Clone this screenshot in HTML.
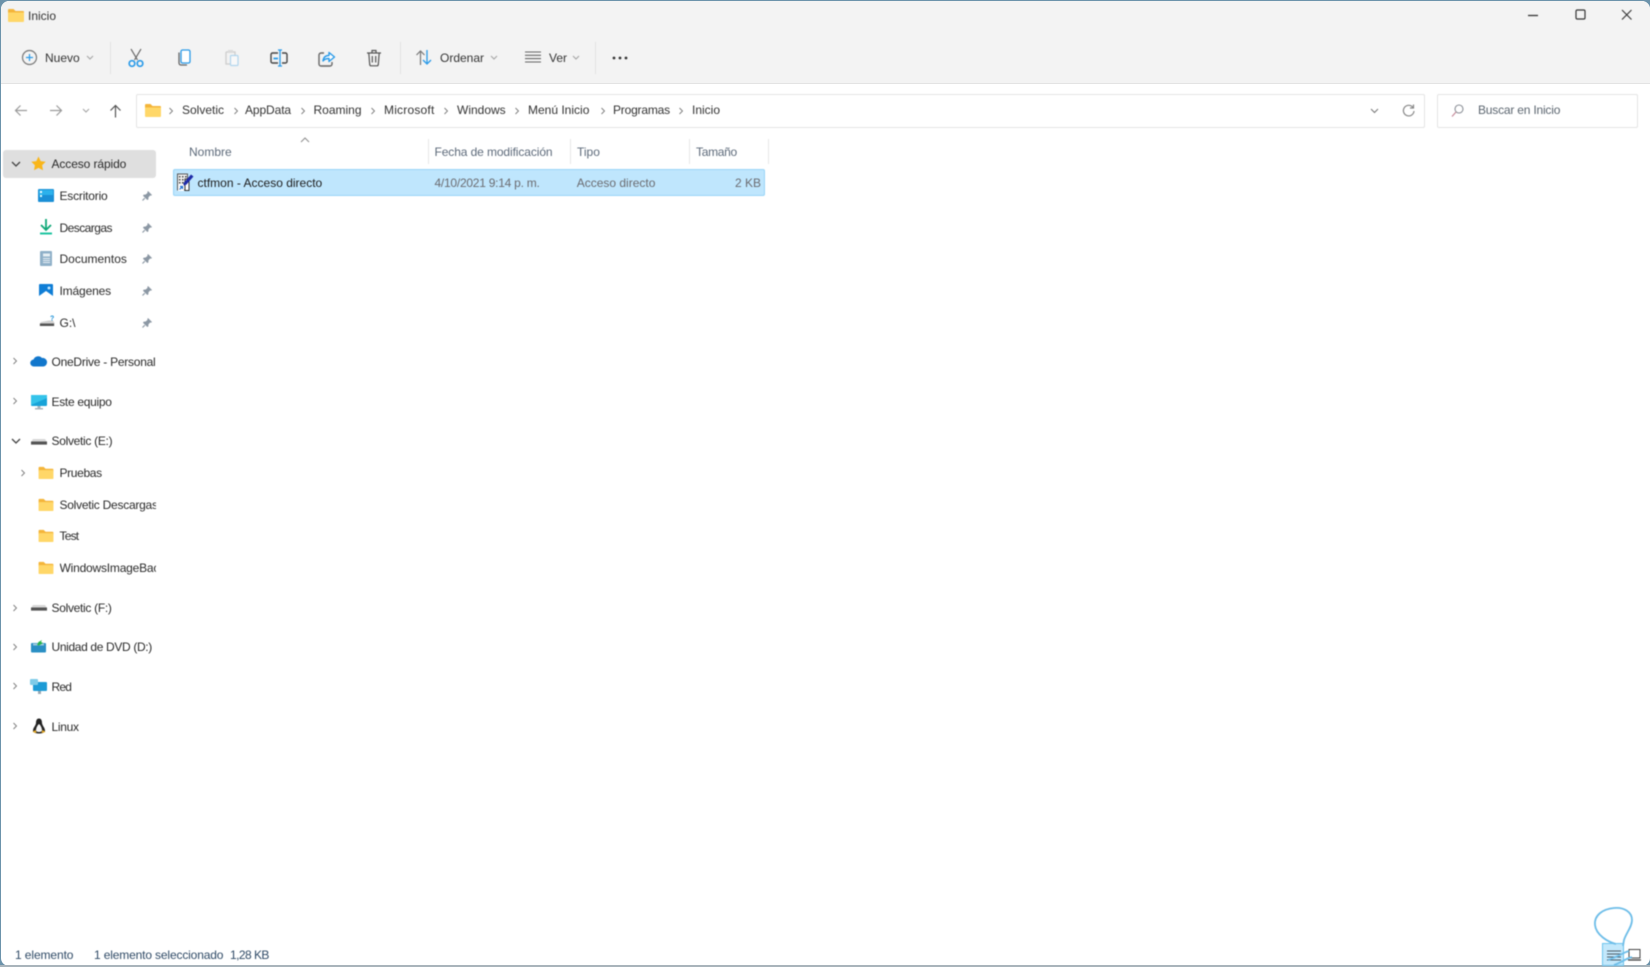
<!DOCTYPE html>
<html lang="es">
<head>
<meta charset="utf-8">
<title>Inicio</title>
<style>
html,body{margin:0;padding:0;width:1650px;height:967px;overflow:hidden;background:#6c93ab}
body{font-family:"Liberation Sans",sans-serif;font-size:12px;color:#2a2a2a}
#win{position:absolute;left:1px;top:1px;width:1649px;height:965px;background:#fff;border-radius:8px;overflow:hidden}
#edge{position:absolute;left:0;top:965px;width:1650px;height:2px;background:#a9b4bb}
#bar{position:absolute;left:-1px;top:-1px;width:1650px;height:83px;background:#f3f3f3;border-bottom:1px solid #e3e3e3}
.t{position:absolute;white-space:nowrap;line-height:16px;height:16px}
.sep{position:absolute;width:1px;background:#e2e2e2}
svg{position:absolute;overflow:visible}
.box{position:absolute;top:94px;height:32px;background:#fff;border:1px solid #e4e4e4;border-radius:2px}
.nav{color:#333}
.h{color:#5d6a7a}
.g{color:#6b6b70}
.st{color:#2f4a66}
</style>
</head>
<body>
<svg width="0" height="0" style="position:absolute">
<defs>
<symbol id="folder" viewBox="0 0 16 14"><path d="M0 2a1 1 0 0 1 1-1h4.500l2 2H15a1 1 0 0 1 1 1v2H0z" fill="#f4b53a"/><path d="M0 4.500h16V13a1 1 0 0 1-1 1H1a1 1 0 0 1-1-1z" fill="#ffd768"/></symbol>
<symbol id="pin" viewBox="0 0 12 12"><path d="M7 1l4 4-1 .7-.7-.3L7.500 7.300 7.300 9.500 6.300 10 2 5.700l.5-1 2.200-.2L6.600 2.700 6.300 2z" fill="#8c98a4"/><path d="M3.800 8.200L1.500 10.500" stroke="#8c98a4" stroke-width="1.200"/></symbol>
<symbol id="cr" viewBox="0 0 8 10"><path d="M2 1l4 4-4 4" fill="none" stroke="#7b7b7b" stroke-width="1.200"/></symbol>
<symbol id="cd" viewBox="0 0 10 8"><path d="M1 2l4 4 4-4" fill="none" stroke="#444" stroke-width="1.300"/></symbol>
<symbol id="cs" viewBox="0 0 8 5"><path d="M1 1l3 3 3-3" fill="none" stroke="#a2a2a2" stroke-width="1"/></symbol>
<symbol id="drive" viewBox="0 0 16 8"><path d="M2 1h12l2 3v3H0V4z" fill="#d7d7d7"/><rect x="0" y="3.500" width="16" height="3" fill="#555"/></symbol>
</defs>
</svg>

<div id="win">
<div id="bar"></div>
</div>
<div id="edge"></div>

<div id="ui" style="position:absolute;left:0;top:0;width:1650px;height:967px;filter:blur(.4px)">
<!-- title -->
<svg style="left:8px;top:8px" width="16" height="14"><use href="#folder" width="16" height="14"/></svg>
<div class="t" style="left:28px;top:8px;color:#333">Inicio</div>
<!-- window controls -->
<svg style="left:1527px;top:10px" width="14" height="12"><path d="M1 5.500h10" stroke="#333" stroke-width="1.300"/></svg>
<svg style="left:1575px;top:9px" width="12" height="12"><rect x="1" y="1" width="9" height="9" rx="1.200" fill="none" stroke="#333" stroke-width="1.200"/></svg>
<svg style="left:1621px;top:9px" width="12" height="12"><path d="M1 1l9.500 9.500M10.500 1L1 10.500" stroke="#333" stroke-width="1.100"/></svg>

<!-- toolbar -->
<svg style="left:21px;top:49px" width="17" height="17"><circle cx="8.500" cy="8.500" r="7" fill="none" stroke="#777" stroke-width="1.200"/><path d="M8.500 5v7M5 8.500h7" stroke="#2a9ae8" stroke-width="1.200"/></svg>
<div class="t nav" style="left:45px;top:50px">Nuevo</div>
<svg style="left:86px;top:55px" width="8" height="5"><use href="#cs" width="8" height="5"/></svg>
<div class="sep" style="left:110px;top:42px;height:32px"></div>

<svg style="left:128px;top:48px" width="16" height="20"><path d="M3 1l6.500 11M13 1L6.500 12" stroke="#666" stroke-width="1.200" fill="none"/><circle cx="4" cy="15.500" r="2.800" fill="none" stroke="#2a9ae8" stroke-width="1.700"/><circle cx="12" cy="15.500" r="2.800" fill="none" stroke="#2a9ae8" stroke-width="1.700"/></svg>
<svg style="left:177px;top:49px" width="14" height="18"><path d="M2 3.500v10.500a2 2 0 0 0 2 2h6" fill="none" stroke="#666" stroke-width="1.300"/><rect x="4" y="1" width="9" height="13" rx="1.500" fill="#fff" stroke="#2a9ae8" stroke-width="1.300"/></svg>
<svg style="left:224px;top:49px" width="15" height="18" opacity=".42"><path d="M2 3h9v3M2 3v12h4" fill="none" stroke="#999" stroke-width="1.300"/><rect x="4" y="1" width="5" height="3" fill="#bbb"/><rect x="6.500" y="6.500" width="7.500" height="10" rx="1" fill="#fff" stroke="#5aaee8" stroke-width="1.200"/></svg>
<svg style="left:270px;top:49px" width="18" height="18"><path d="M8 4H2.500a1.500 1.500 0 0 0-1.500 1.500v7a1.500 1.500 0 0 0 1.500 1.500H8M12 4h3.500A1.500 1.500 0 0 1 17 5.500v7a1.500 1.500 0 0 1-1.500 1.500H12" fill="none" stroke="#444" stroke-width="1.400"/><path d="M10 1v16M8 1h4M8 17h4" stroke="#2a9ae8" stroke-width="1.300" fill="none"/><path d="M3.500 9.500H8" stroke="#2a9ae8" stroke-width="1.800"/></svg>
<svg style="left:318px;top:49px" width="18" height="18"><path d="M6 4H3a2 2 0 0 0-2 2v9a2 2 0 0 0 2 2h9a2 2 0 0 0 2-2v-2" fill="none" stroke="#666" stroke-width="1.400"/><path d="M5 12c.5-4 3-5.500 6-5.500V3.500l5.500 4.500-5.500 4.500V9.500c-2.500 0-4.500.5-6 2.500z" fill="#fff" stroke="#2a9ae8" stroke-width="1.400" stroke-linejoin="round"/></svg>
<svg style="left:366px;top:49px" width="16" height="18"><path d="M1 4h14M6 3.500V1.500h4v2M2.800 4l.9 11.500a1.500 1.500 0 0 0 1.500 1.300h5.600a1.500 1.500 0 0 0 1.500-1.300L13.200 4M6.300 7v6.500M9.700 7v6.500" fill="none" stroke="#555" stroke-width="1.200"/></svg>
<div class="sep" style="left:400px;top:42px;height:32px"></div>

<svg style="left:415px;top:49px" width="18" height="17"><path d="M5.500 16V2M1.500 6l4-4 4 4" fill="none" stroke="#777" stroke-width="1.200"/><path d="M12 1v14M8 11l4 4 4-4" fill="none" stroke="#2a9ae8" stroke-width="1.300"/></svg>
<div class="t nav" style="left:440px;top:50px">Ordenar</div>
<svg style="left:490px;top:55px" width="8" height="5"><use href="#cs" width="8" height="5"/></svg>
<svg style="left:525px;top:51px" width="16" height="13"><path d="M0 1h16M0 4.300h16M0 7.600h16M0 11h16" stroke="#666" stroke-width="1.100"/></svg>
<div class="t nav" style="left:549px;top:50px">Ver</div>
<svg style="left:572px;top:55px" width="8" height="5"><use href="#cs" width="8" height="5"/></svg>
<div class="sep" style="left:595px;top:42px;height:32px"></div>
<svg style="left:612px;top:56px" width="16" height="4"><circle cx="2" cy="2" r="1.400" fill="#333"/><circle cx="8" cy="2" r="1.400" fill="#333"/><circle cx="14" cy="2" r="1.400" fill="#333"/></svg>

<!-- nav row -->
<svg style="left:14px;top:104px" width="14" height="13"><path d="M13 6.500H1.500M6.500 1.500l-5 5 5 5" fill="none" stroke="#9a9a9a" stroke-width="1.200"/></svg>
<svg style="left:49px;top:104px" width="14" height="13"><path d="M1 6.500h11.500M7.500 1.500l5 5-5 5" fill="none" stroke="#9a9a9a" stroke-width="1.200"/></svg>
<svg style="left:82px;top:108px" width="8" height="5"><use href="#cs" width="8" height="5"/></svg>
<svg style="left:109px;top:104px" width="13" height="14"><path d="M6.500 13.500V1.500M1.500 6.500l5-5 5 5" fill="none" stroke="#555" stroke-width="1.200"/></svg>

<div class="box" style="left:136px;width:1287px"></div>
<div class="box" style="left:1437px;width:199px"></div>
<svg style="left:145px;top:103px" width="16" height="14"><use href="#folder" width="16" height="14"/></svg>
<svg style="left:168px;top:107px" width="6" height="8"><use href="#cr" width="6" height="8"/></svg>
<div class="t nav" style="left:182px;top:102px">Solvetic</div>
<svg style="left:233px;top:107px" width="6" height="8"><use href="#cr" width="6" height="8"/></svg>
<div class="t nav" style="left:245px;top:102px;letter-spacing:-.1px">AppData</div>
<svg style="left:300px;top:107px" width="6" height="8"><use href="#cr" width="6" height="8"/></svg>
<div class="t nav" style="left:313.500px;top:102px">Roaming</div>
<svg style="left:370px;top:107px" width="6" height="8"><use href="#cr" width="6" height="8"/></svg>
<div class="t nav" style="left:384px;top:102px;letter-spacing:.2px">Microsoft</div>
<svg style="left:443px;top:107px" width="6" height="8"><use href="#cr" width="6" height="8"/></svg>
<div class="t nav" style="left:457px;top:102px">Windows</div>
<svg style="left:514px;top:107px" width="6" height="8"><use href="#cr" width="6" height="8"/></svg>
<div class="t nav" style="left:528px;top:102px">Menú Inicio</div>
<svg style="left:600px;top:107px" width="6" height="8"><use href="#cr" width="6" height="8"/></svg>
<div class="t nav" style="left:613px;top:102px;letter-spacing:-.2px">Programas</div>
<svg style="left:678px;top:107px" width="6" height="8"><use href="#cr" width="6" height="8"/></svg>
<div class="t nav" style="left:692px;top:102px">Inicio</div>

<svg style="left:1370px;top:108px" width="9" height="6"><path d="M1 1l3.500 3.500L8 1" fill="none" stroke="#777" stroke-width="1"/></svg>
<svg style="left:1402px;top:104px" width="13" height="13"><path d="M11 3.500A5.300 5.300 0 1 0 12 7M11.500 .5v3.500H8" fill="none" stroke="#888" stroke-width="1.200"/></svg>
<svg style="left:1451px;top:104px" width="13" height="14"><circle cx="8" cy="5" r="4" fill="none" stroke="#8a8f96" stroke-width="1.100"/><path d="M5 8l-4 4.500" stroke="#c58a9a" stroke-width="1.200"/></svg>
<div class="t g" style="left:1478px;top:102px;color:#5c6670;letter-spacing:-.2px">Buscar en Inicio</div>

<!-- sidebar -->
<div style="position:absolute;left:3px;top:150px;width:153px;height:28px;background:#dfdfdf;border-radius:3px"></div>
<svg style="left:11px;top:160px" width="10" height="8"><use href="#cd" width="10" height="8"/></svg>
<svg style="left:31px;top:156px" width="15" height="15"><path d="M7.500 .5l2.200 4.600 5 .7-3.600 3.500.9 5-4.500-2.400L3 14.300l.9-5L.3 5.800l5-.7z" fill="#f9b61a"/></svg>
<div class="t" style="left:51.500px;top:156px;letter-spacing:-.1px">Acceso rápido</div>

<svg style="left:38px;top:189px" width="16" height="13"><rect width="16" height="13" rx="1" fill="#1a8fd6"/><rect x="1" y="1" width="14" height="5" fill="#2cb2ec"/><rect x="2" y="2" width="2" height="2" fill="#fff"/><rect x="2" y="6" width="2" height="2" fill="#dff"/></svg>
<div class="t" style="left:59.500px;top:188px;letter-spacing:-.2px">Escritorio</div>
<svg style="left:141px;top:190px" width="12" height="12"><use href="#pin" width="12" height="12"/></svg>

<svg style="left:39px;top:219px" width="14" height="16"><path d="M7 0v10.500M2 6l5 5 5-5" fill="none" stroke="#10a878" stroke-width="1.800"/><path d="M1 14.500h12" stroke="#1fc4a0" stroke-width="2"/></svg>
<div class="t" style="left:59.500px;top:220px;letter-spacing:-.55px">Descargas</div>
<svg style="left:141px;top:222px" width="12" height="12"><use href="#pin" width="12" height="12"/></svg>

<svg style="left:40px;top:251px" width="12" height="15"><rect width="12" height="15" rx="1" fill="#8fb0c8"/><rect x="3" y="2.500" width="7" height="3" fill="#e6eef4"/><path d="M3 7.500h7M3 9.500h7M3 11.500h7" stroke="#e6eef4" stroke-width="1"/></svg>
<div class="t" style="left:59.500px;top:251px">Documentos</div>
<svg style="left:141px;top:253px" width="12" height="12"><use href="#pin" width="12" height="12"/></svg>

<svg style="left:39px;top:284px" width="14" height="14"><rect width="14" height="14" rx="1" fill="#0f7ed6"/><path d="M0 12l7-5 7 5v2H0z" fill="#fff"/><circle cx="10" cy="4" r="1.500" fill="#bfe6ff"/></svg>
<div class="t" style="left:59.500px;top:283px;letter-spacing:-.15px">Imágenes</div>
<svg style="left:141px;top:285px" width="12" height="12"><use href="#pin" width="12" height="12"/></svg>

<svg style="left:39px;top:316px" width="16" height="12"><path d="M2 6l8-1.500h4l1.500 2.500v3H.5V8z" fill="#d0d0d0"/><rect x="1" y="7.500" width="14" height="2.500" fill="#555"/><text x="11" y="4.500" font-family="Liberation Sans" font-size="7" font-weight="bold" fill="#1a8fd6">?</text></svg>
<div class="t" style="left:59.500px;top:315px">G:\</div>
<svg style="left:141px;top:317px" width="12" height="12"><use href="#pin" width="12" height="12"/></svg>

<svg style="left:12px;top:357px" width="6" height="8"><use href="#cr" width="6" height="8"/></svg>
<svg style="left:30px;top:355px" width="17" height="12"><path d="M4 11.500a3.500 3.500 0 0 1-.5-7A5 5 0 0 1 12 3a3.800 3.800 0 0 1 1.500 8.500z" fill="#1277cc"/></svg>
<div class="t" style="left:51.500px;top:354px;width:104px;overflow:hidden;letter-spacing:-.25px">OneDrive - Personal</div>

<svg style="left:12px;top:397px" width="6" height="8"><use href="#cr" width="6" height="8"/></svg>
<svg style="left:31px;top:395px" width="16" height="15"><rect width="16" height="11" rx="1" fill="#18a3d8"/><path d="M0 0h16v3L0 10z" fill="#35c3ea"/><rect x="6.500" y="11" width="3" height="2" fill="#a8b4bc"/><rect x="4" y="13" width="8" height="1.500" fill="#a8b4bc"/></svg>
<div class="t" style="left:51.500px;top:394px;letter-spacing:-.3px">Este equipo</div>

<svg style="left:11px;top:437px" width="10" height="8"><use href="#cd" width="10" height="8"/></svg>
<svg style="left:31px;top:438px" width="16" height="8"><use href="#drive" width="16" height="8"/></svg>
<div class="t" style="left:51.500px;top:433px;letter-spacing:-.3px">Solvetic (E:)</div>

<svg style="left:20px;top:469px" width="6" height="8"><use href="#cr" width="6" height="8"/></svg>
<svg style="left:38px;top:466px" width="16" height="13"><use href="#folder" width="16" height="13"/></svg>
<div class="t" style="left:59.500px;top:465px;letter-spacing:-.35px">Pruebas</div>

<svg style="left:38px;top:498px" width="16" height="13"><use href="#folder" width="16" height="13"/></svg>
<div class="t" style="left:59.500px;top:497px;width:96px;overflow:hidden;letter-spacing:-.25px">Solvetic Descargas</div>

<svg style="left:38px;top:529px" width="16" height="13"><use href="#folder" width="16" height="13"/></svg>
<div class="t" style="left:59.500px;top:528px;letter-spacing:-.8px">Test</div>

<svg style="left:38px;top:561px" width="16" height="13"><use href="#folder" width="16" height="13"/></svg>
<div class="t" style="left:59.500px;top:560px;width:96px;overflow:hidden;letter-spacing:-.2px">WindowsImageBackup</div>

<svg style="left:12px;top:604px" width="6" height="8"><use href="#cr" width="6" height="8"/></svg>
<svg style="left:31px;top:604px" width="16" height="8"><use href="#drive" width="16" height="8"/></svg>
<div class="t" style="left:51.500px;top:600px;letter-spacing:-.3px">Solvetic (F:)</div>

<svg style="left:12px;top:643px" width="6" height="8"><use href="#cr" width="6" height="8"/></svg>
<svg style="left:31px;top:639px" width="15" height="14"><rect y="4" width="15" height="9.500" rx="1" fill="#2a8fc4"/><path d="M2 4.500h11v2H2z" fill="#9cc8de"/><path d="M6 6l1.500-3L11 1l-1 2 2 1-4 2.500z" fill="#27b34a"/></svg>
<div class="t" style="left:51.500px;top:639px;letter-spacing:-.35px">Unidad de DVD (D:)</div>

<svg style="left:12px;top:682px" width="6" height="8"><use href="#cr" width="6" height="8"/></svg>
<svg style="left:30px;top:679px" width="18" height="16"><rect x="3" y="3" width="14" height="9" rx="1" fill="#1c9bd6"/><rect x="0" y="0" width="8" height="6" rx="1" fill="#7ecbe8"/><rect x="8" y="12" width="3" height="3" fill="#9aa8b2"/></svg>
<div class="t" style="left:51.500px;top:679px;letter-spacing:-.8px">Red</div>

<svg style="left:12px;top:722px" width="6" height="8"><use href="#cr" width="6" height="8"/></svg>
<svg style="left:31px;top:718px" width="16" height="16"><path d="M8 .5C5.500.5 5 3 5 5c0 2-3 5-3 7.500C2 15 6 15.500 8 15.500s6-.5 6-3C14 10 11 7 11 5c0-2-.5-4.500-3-4.500z" fill="#222"/><path d="M8 6c-1.500 1-3 4-3 6.500 0 1 1.500 1.500 3 1.500s3-.5 3-1.500C11 10 9.500 7 8 6z" fill="#f6f6f6"/><path d="M1.500 14l3-2 1 3zM14.500 14l-3-2-1 3z" fill="#f2b01e"/></svg>
<div class="t" style="left:51.500px;top:719px;letter-spacing:-.3px">Linux</div>

<!-- list header -->
<svg style="left:300px;top:137px" width="10" height="6"><path d="M1 5l4-4 4 4" fill="none" stroke="#8d8d8d" stroke-width="1"/></svg>
<div class="t h" style="left:189px;top:144px">Nombre</div>
<div class="sep" style="left:428px;top:139px;height:25px;background:#e8e8e8"></div>
<div class="t h" style="left:434.500px;top:144px;letter-spacing:-.1px">Fecha de modificación</div>
<div class="sep" style="left:570px;top:139px;height:25px;background:#e8e8e8"></div>
<div class="t h" style="left:577px;top:144px">Tipo</div>
<div class="sep" style="left:689px;top:139px;height:25px;background:#e8e8e8"></div>
<div class="t h" style="left:696px;top:144px;letter-spacing:-.3px">Tamaño</div>
<div class="sep" style="left:768px;top:139px;height:25px;background:#e8e8e8"></div>

<!-- selected row -->
<div style="position:absolute;left:173px;top:169px;width:590px;height:25px;background:#bfe6fd;border:1px solid #99d5f8;border-radius:2px"></div>
<svg style="left:177px;top:173px" width="17" height="18"><rect x="0.500" y="1" width="10" height="16" fill="#f4f4f4" stroke="#555"/><rect x="8" y="6" width="4" height="11.500" fill="#fff" stroke="#333"/><path d="M2 3h1.500v1.500H2zM5 3h1.500v1.500H5zM8 3h1.500v1.500H8zM2 6h1.500v1.500H2zM5 6h1.500v1.500H5zM2 9h1.500v1.500H2zM5 9h1.500v1.500H5z" fill="#444"/><path d="M6.500 10L14 1.500l2.500 2-7 8-3 1.500z" fill="#1f2ba8"/><rect x="1" y="12" width="6" height="6" fill="#fff"/><path d="M2.500 16.500L5.500 13.500M3 13.500h2.500V16" stroke="#1e6fd0" stroke-width="1.200" fill="none"/></svg>
<div class="t" style="left:197.500px;top:175px;color:#1c1c1c">ctfmon - Acceso directo</div>
<div class="t g" style="left:434.500px;top:175px;letter-spacing:-.25px">4/10/2021 9:14 p. m.</div>
<div class="t g" style="left:576.700px;top:175px">Acceso directo</div>
<div class="t g" style="left:700px;top:175px;width:61px;text-align:right">2 KB</div>

<!-- status bar -->
<div class="t st" style="left:15px;top:947px;letter-spacing:-.1px">1 elemento</div>
<div class="t st" style="left:94px;top:947px;letter-spacing:-.15px">1 elemento seleccionado</div>
<div class="t st" style="left:230px;top:947px;letter-spacing:-.55px">1,28 KB</div>

<!-- bottom-right view buttons and watermark -->
<div style="position:absolute;left:1602px;top:943px;width:20px;height:21px;background:#c3e8fb;border:1px solid #6cc4ef"></div>
<svg style="left:1607px;top:950px" width="15" height="11"><path d="M0 1h14M0 4h14M0 7h14M0 10h14" stroke="#4a5a66" stroke-width="1"/></svg>
<svg style="left:1628px;top:949px" width="13" height="12"><rect x="1" y=".5" width="11" height="8.500" fill="#fff" stroke="#444"/><path d="M0 11h13" stroke="#333" stroke-width="1.200"/></svg>
<svg style="left:1590px;top:905px" width="60" height="60"><path d="M26 39C18 37 6 30 5 20 4 10 13 4 24 3c10-1 18 4 18 12 0 7-6 13-8 20l-1 6" fill="none" stroke="#6dbde8" stroke-width="1.800"/><path d="M18 55c6-2 14-6 18-8l3-1M24 60c6-2 10-5 15-7l3-1" fill="none" stroke="#6dbde8" stroke-width="1.800"/></svg>
</div>
</body>
</html>
